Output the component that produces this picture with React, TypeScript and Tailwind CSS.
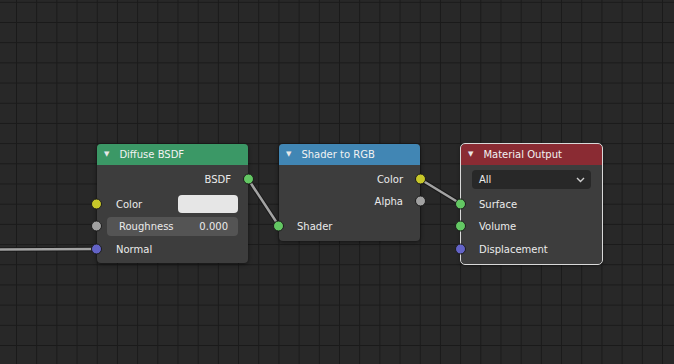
import type { ReactNode } from 'react';

type SocketKind = 'yellow' | 'gray' | 'green' | 'purple';

const socketColor: Record<SocketKind, string> = {
  yellow: 'bg-[#c7c729]',
  gray: 'bg-[#a1a1a1]',
  green: 'bg-[#63c763]',
  purple: 'bg-[#6363c7]',
};

function Socket({ kind, side }: { kind: SocketKind; side: 'left' | 'right' }) {
  return (
    <span
      className={`absolute top-1/2 size-[11px] -translate-y-1/2 rounded-full border border-[#1b1b1b] ${socketColor[kind]} ${
        side === 'left' ? '-left-[6px]' : '-right-[6px]'
      }`}
    />
  );
}

function Row({
  children,
  socket,
  side = 'left',
  className = '',
}: {
  children: ReactNode;
  socket?: SocketKind;
  side?: 'left' | 'right';
  className?: string;
}) {
  return (
    <div className={`relative flex h-[22px] items-center ${className}`}>
      {socket && <Socket kind={socket} side={side} />}
      {children}
    </div>
  );
}

function Node({
  title,
  header,
  className,
  selected = false,
  children,
}: {
  title: string;
  header: string;
  className: string;
  selected?: boolean;
  children: ReactNode;
}) {
  return (
    <div
      className={`absolute flex flex-col rounded-[4px] bg-[#3d3d3d] shadow-[0_1px_4px_rgba(0,0,0,0.55)] ${className} ${
        selected ? 'outline outline-1 outline-[#d9d9d9]' : ''
      }`}
    >
      <div className={`flex h-[21px] shrink-0 items-center gap-[10px] rounded-t-[4px] pl-[7px] text-[#f2f2f2] ${header}`}>
        <span className="text-[7px] text-[#e8e8e8]">▼</span>
        <span>{title}</span>
      </div>
      {children}
    </div>
  );
}

export default function App() {
  return (
    <div
      className="relative h-[364px] w-[674px] overflow-hidden bg-[#282828] bg-[linear-gradient(to_right,#1a1a1a_1px,transparent_1px),linear-gradient(to_bottom,#1a1a1a_1px,transparent_1px)] bg-[size:20.2px_20.2px] bg-[position:16px_22px] text-[10px] text-[#ebebeb]"
      style={{ fontFamily: '"DejaVu Sans", "Liberation Sans", sans-serif' }}
    >
      {/* links */}
      <svg className="absolute inset-0" width={674} height={364}>
        <g strokeLinecap="round">
          <path d="M0 249.5 L97 249" stroke="#1a1a1a" strokeWidth={4.5} />
          <path d="M248 179 L279 226" stroke="#1a1a1a" strokeWidth={4.5} />
          <path d="M420 179 L461 204" stroke="#1a1a1a" strokeWidth={4.5} />
          <path d="M0 249.5 L97 249" stroke="#a3a3a3" strokeWidth={2.5} />
          <path d="M248 179 L279 226" stroke="#a3a3a3" strokeWidth={2.5} />
          <path d="M420 179 L461 204" stroke="#a3a3a3" strokeWidth={2.5} />
        </g>
      </svg>

      <Node title="Diffuse BSDF" header="bg-[#3b9866]" className="left-[97px] top-[144px] h-[119px] w-[151px]">
        <Row socket="green" side="right" className="mt-[3px] justify-end pr-[17px]">
          BSDF
        </Row>
        <Row socket="yellow" className="mt-[3px] justify-between pl-[19px] pr-[10px]">
          <span>Color</span>
          <span className="h-[18px] w-[60px] rounded-[4px] bg-[#e6e6e6]" />
        </Row>
        <Row socket="gray" className="px-[10px]">
          <div className="flex h-[19px] flex-1 items-center justify-between rounded-[4px] bg-[#545454] pl-[12px] pr-[10px]">
            <span>Roughness</span>
            <span>0.000</span>
          </div>
        </Row>
        <Row socket="purple" className="mt-[1px] pl-[19px]">
          Normal
        </Row>
      </Node>

      <Node title="Shader to RGB" header="bg-[#4186b4]" className="left-[279px] top-[144px] h-[97px] w-[141px]">
        <Row socket="yellow" side="right" className="mt-[3px] justify-end pr-[17px]">
          Color
        </Row>
        <Row socket="gray" side="right" className="justify-end pr-[17px]">
          Alpha
        </Row>
        <Row socket="green" className="mt-[3px] pl-[18px]">
          Shader
        </Row>
      </Node>

      <Node
        title="Material Output"
        header="bg-[#8a2b33]"
        selected
        className="left-[461px] top-[144px] h-[120px] w-[141px]"
      >
        <div className="mt-[5px] px-[11px]">
          <div className="flex h-[19px] items-center justify-between rounded-[4px] bg-[#282828] pl-[7px] pr-[6px]">
            <span>All</span>
            <svg width="9" height="6" viewBox="0 0 9 6">
              <path d="M1 1 L4.5 4.5 L8 1" fill="none" stroke="#cfcfcf" strokeWidth={1.4} />
            </svg>
          </div>
        </div>
        <Row socket="green" className="mt-[4px] pl-[18px]">
          Surface
        </Row>
        <Row socket="green" className="pl-[18px]">
          Volume
        </Row>
        <Row socket="purple" className="mt-[1px] pl-[18px]">
          Displacement
        </Row>
      </Node>
    </div>
  );
}
